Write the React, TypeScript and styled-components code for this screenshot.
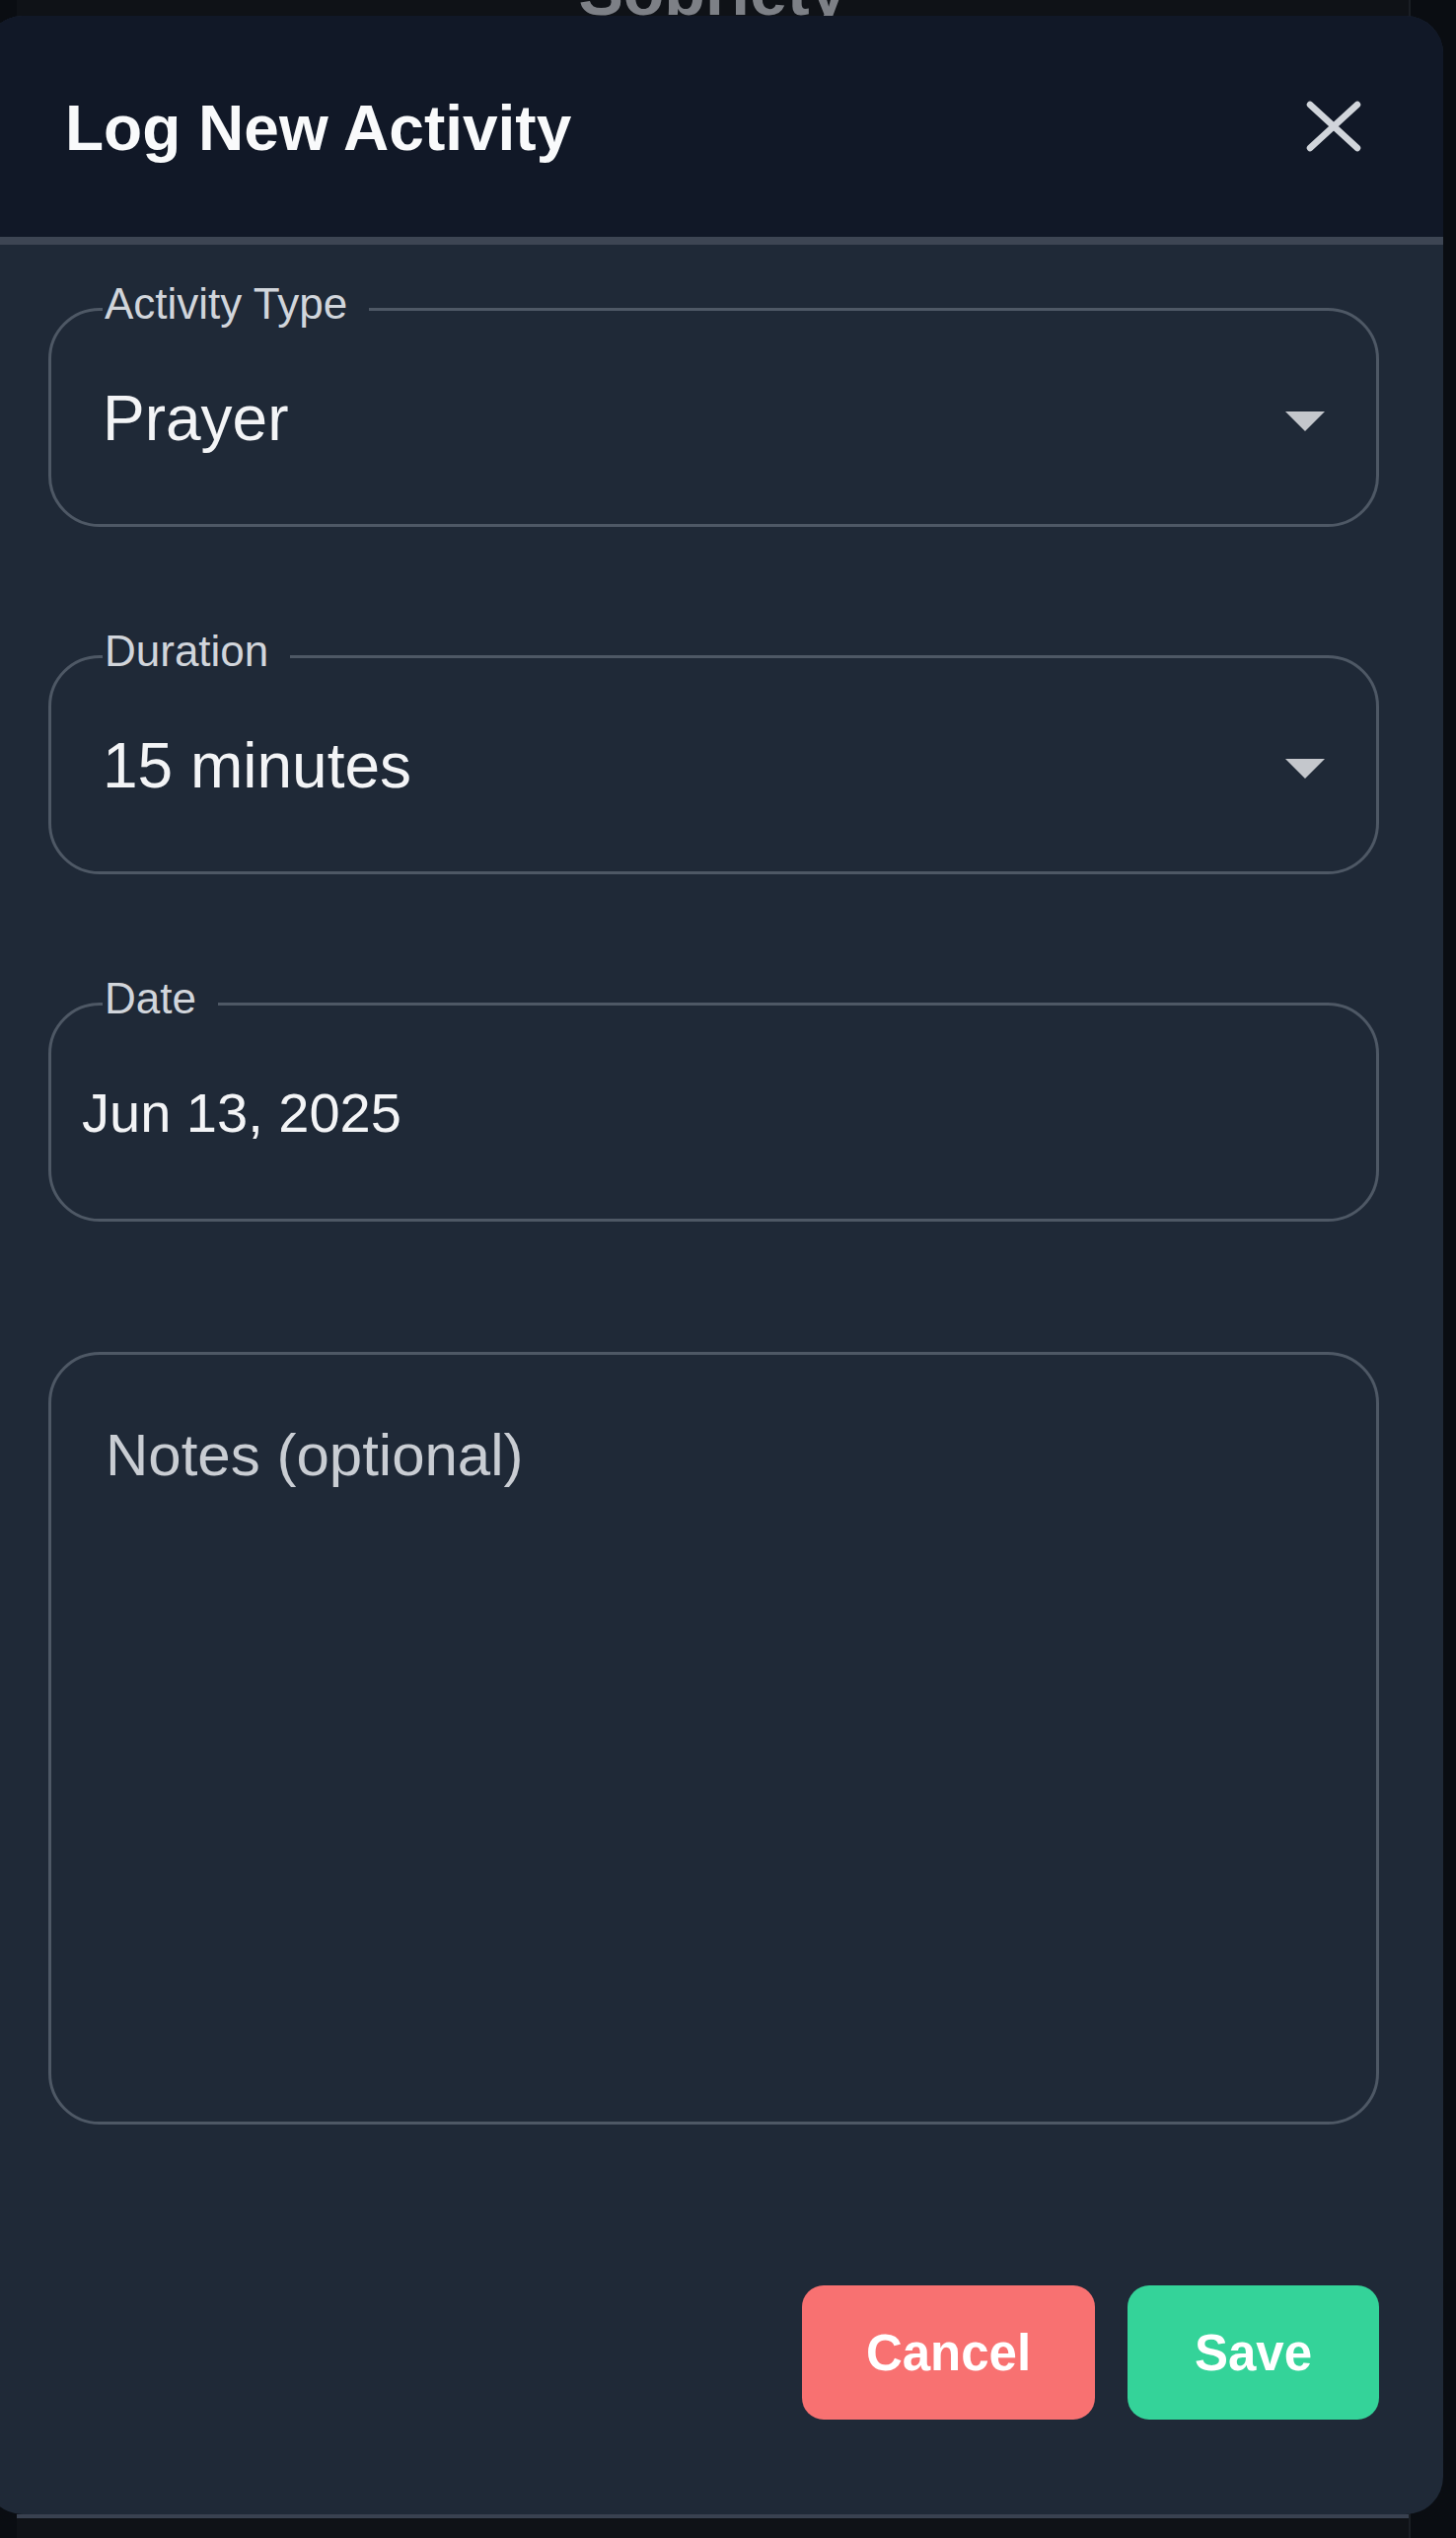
import * as React from "react"
import styled, { createGlobalStyle } from "styled-components"

const GlobalStyle = createGlobalStyle`
  html, body {
    margin: 0;
    padding: 0;
    background: #0a0d12;
  }
  body {
    font-family: "Liberation Sans", Arial, sans-serif;
  }
  * {
    box-sizing: border-box;
  }
`

const Screen = styled.div`
  width: 1476px;
  height: 2572px;
  overflow: hidden;
  background: #0a0d12;
`

// the page that sits behind the sheet
const Backdrop = styled.div`
  margin: 0 46px 0 17px;
  min-height: 2572px;
  background: #0f1217;
  border-right: 2px solid #1a1e24;
  display: flex;
  flex-direction: column;
`

const PageHeading = styled.div`
  height: 16px;
  overflow: hidden;
  display: flex;
  justify-content: center;
  align-items: flex-end;
`

const PageTitle = styled.span`
  font-size: 68px;
  line-height: 68px;
  font-weight: 700;
  color: #7d8086;
  margin-bottom: -9px;
`

const Sheet = styled.div`
  margin: 0 -35px 0 -32px;
  border-radius: 38px;
  overflow: hidden;
  background: #1f2937;
`

const SheetHeader = styled.div`
  height: 232px;
  padding: 4px 83px 0 81px;
  background: #111827;
  border-bottom: 8px solid #3d4553;
  display: flex;
  align-items: center;
  justify-content: space-between;
`

const SheetTitle = styled.h2`
  margin: 0;
  font-size: 64px;
  font-weight: 700;
  color: #f9fafb;
`

const CloseButton = styled.button`
  border: 0;
  padding: 0;
  background: none;
  display: flex;
  color: #d1d5db;
  margin-top: -4px;
`

const SheetBody = styled.div`
  padding: 35px 65px 96px 64px;
  display: flex;
  flex-direction: column;
  gap: 101px;
`

const Field = styled.fieldset`
  margin: 0;
  padding: 44px 52px 72px 52px;
  border: 3px solid #4e5865;
  border-radius: 52px;
`

const Legend = styled.legend`
  padding: 0 22px 12px 2px;
  font-size: 44px;
  line-height: 49px;
  color: #d1d5db;
`

const ValueRow = styled.div`
  height: 71px;
  display: flex;
  align-items: center;
  justify-content: space-between;
`

const Value = styled.span<{ $size?: number; $shift?: number }>`
  font-size: ${(p) => p.$size ?? 64}px;
  margin-left: ${(p) => p.$shift ?? 0}px;
  color: #f3f4f6;
`

const Caret = styled.span`
  width: 0;
  height: 0;
  margin-top: 6px;
  border-left: 20px solid transparent;
  border-right: 20px solid transparent;
  border-top: 20px solid #c4c7cc;
`

const Notes = styled.textarea`
  display: block;
  width: 100%;
  height: 783px;
  margin-top: 31px;
  padding: 68px 55px;
  border: 3px solid #4e5865;
  border-radius: 52px;
  background: transparent;
  resize: none;
  outline: none;
  font-family: "Liberation Sans", Arial, sans-serif;
  font-size: 60px;
  line-height: 68px;
  color: #f3f4f6;

  &::placeholder {
    color: #c9cdd3;
    opacity: 1;
  }
`

const Actions = styled.div`
  margin-top: 163px;
  display: flex;
  justify-content: flex-end;
  gap: 33px;
`

const ActionButton = styled.button<{ $bg: string; $width: number }>`
  width: ${(p) => p.$width}px;
  height: 136px;
  border: 0;
  border-radius: 22px;
  background: ${(p) => p.$bg};
  color: #ffffff;
  font-family: "Liberation Sans", Arial, sans-serif;
  font-size: 51px;
  font-weight: 700;
`

const BelowSheet = styled.div`
  flex: 1;
  border-top: 4px solid #394150;
`

function SelectField({ label, value }: { label: string; value: string }) {
  return (
    <Field>
      <Legend>{label}</Legend>
      <ValueRow>
        <Value>{value}</Value>
        <Caret />
      </ValueRow>
    </Field>
  )
}

export default function App() {
  return (
    <Screen>
      <GlobalStyle />
      <Backdrop>
        <PageHeading>
          <PageTitle>Sobriety</PageTitle>
        </PageHeading>
        <Sheet>
          <SheetHeader>
            <SheetTitle>Log New Activity</SheetTitle>
            <CloseButton aria-label="Close">
              <svg width="56" height="52" viewBox="0 0 56 52" fill="none">
                <path
                  d="M4 4 L52 48 M52 4 L4 48"
                  stroke="currentColor"
                  strokeWidth="6.5"
                  strokeLinecap="round"
                />
              </svg>
            </CloseButton>
          </SheetHeader>
          <SheetBody>
            <SelectField label="Activity Type" value="Prayer" />
            <SelectField label="Duration" value="15 minutes" />
            <Field>
              <Legend>Date</Legend>
              <ValueRow>
                <Value $size={56} $shift={-21}>Jun 13, 2025</Value>
              </ValueRow>
            </Field>
            <div>
              <Notes placeholder="Notes (optional)" />
              <Actions>
                <ActionButton $bg="#f87171" $width={297}>Cancel</ActionButton>
                <ActionButton $bg="#34d399" $width={255}>Save</ActionButton>
              </Actions>
            </div>
          </SheetBody>
        </Sheet>
        <BelowSheet />
      </Backdrop>
    </Screen>
  )
}
